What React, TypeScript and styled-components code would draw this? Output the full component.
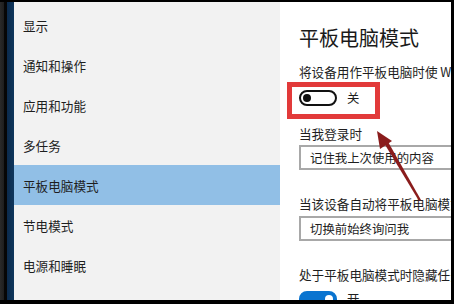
import React from "react";
import styled, { createGlobalStyle } from "styled-components";

const Global = createGlobalStyle`
  html, body { margin: 0; padding: 0; background: #000; }
  body { font-family: "Noto Sans CJK SC", "Noto Sans", sans-serif; }
`;

const Frame = styled.div`
  position: relative;
  width: 454px;
  height: 304px;
  box-sizing: border-box;
  padding: 2px 3px 4px 0;
  background: #000;
  display: flex;
  overflow: hidden;
`;

const LeftEdge = styled.div`
  width: 14px;
  flex: none;
  background: linear-gradient(
    to right,
    #2a2a2a 0px,
    #1e1e1e 4px,
    #060606 4px,
    #060606 7px,
    #0b2a4c 7px,
    #0f365c 14px
  );
`;

const Sidebar = styled.nav`
  width: 266px;
  flex: none;
  background: #f2f2f2;
  padding-top: 3px;
  box-sizing: border-box;
  overflow: hidden;
`;

const NavItem = styled.div<{ $active?: boolean }>`
  height: 40px;
  display: flex;
  align-items: center;
  padding-left: 9px;
  font-size: 12.6px;
  color: #1e1e1e;
  background: ${(p) => (p.$active ? "#91bfe6" : "transparent")};
  white-space: nowrap;
`;

const Content = styled.main`
  flex: 1;
  background: #fff;
  padding-left: 19px;
  overflow: hidden;
  white-space: nowrap;
`;

const Title = styled.h1`
  margin: 23px 0 0 0;
  font-size: 20px;
  line-height: 26px;
  font-weight: 400;
  color: #1a1a1a;
`;

const Label = styled.div<{ $top: number }>`
  margin-top: ${(p) => p.$top}px;
  font-size: 12.6px;
  line-height: 16px;
  color: #1e1e1e;
`;

const ToggleRow = styled.div<{ $top: number }>`
  margin-top: ${(p) => p.$top}px;
  display: flex;
  align-items: center;
  gap: 10px;
  font-size: 12.4px;
  color: #1e1e1e;
  height: 18px;
`;

const Toggle = styled.div<{ $on?: boolean }>`
  width: 38px;
  height: 16px;
  box-sizing: border-box;
  border-radius: 8px;
  border: 2px solid ${(p) => (p.$on ? "#0a74d0" : "#111")};
  background: ${(p) => (p.$on ? "#0a74d0" : "#fff")};
  display: flex;
  align-items: center;
  justify-content: ${(p) => (p.$on ? "flex-end" : "flex-start")};
  padding: 0 2px;
`;

const Knob = styled.div<{ $on?: boolean }>`
  width: 8px;
  height: 8px;
  border-radius: 50%;
  background: ${(p) => (p.$on ? "#fff" : "#111")};
`;

const Select = styled.div<{ $top: number }>`
  margin-top: ${(p) => p.$top}px;
  width: 200px;
  height: 25px;
  box-sizing: border-box;
  border: 2px solid #a8a8a8;
  border-right: none;
  display: flex;
  align-items: center;
  padding-left: 9px;
  font-size: 12.4px;
  color: #1e1e1e;
`;

const RedBox = styled.div`
  position: absolute;
  left: 287px;
  top: 82px;
  width: 93px;
  height: 37px;
  box-sizing: border-box;
  border: 5px solid #e23a3a;
  pointer-events: none;
`;

const Arrow = styled.svg`
  position: absolute;
  left: 0;
  top: 0;
  pointer-events: none;
`;

const items = [
  "显示",
  "通知和操作",
  "应用和功能",
  "多任务",
  "平板电脑模式",
  "节电模式",
  "电源和睡眠",
  "存储",
];

export default function App() {
  return (
    <>
      <Global />
      <Frame>
        <LeftEdge />
        <Sidebar>
          {items.map((t) => (
            <NavItem key={t} $active={t === "平板电脑模式"}>
              {t}
            </NavItem>
          ))}
        </Sidebar>
        <Content>
          <Title>平板电脑模式</Title>
          <Label $top={13}>将设备用作平板电脑时使 Windows 更便于触控</Label>
          <ToggleRow $top={9}>
            <Toggle>
              <Knob />
            </Toggle>
            关
          </ToggleRow>
          <Label $top={19}>当我登录时</Label>
          <Select $top={3}>记住我上次使用的内容</Select>
          <Label $top={26}>当该设备自动将平板电脑模式切换为打开或关闭时</Label>
          <Select $top={4}>切换前始终询问我</Select>
          <Label $top={26}>处于平板电脑模式时隐藏任务栏上的应用图标</Label>
          <ToggleRow $top={7}>
            <Toggle $on>
              <Knob $on />
            </Toggle>
            开
          </ToggleRow>
        </Content>
        <RedBox />
        <Arrow width="454" height="304" viewBox="0 0 454 304">
          <polygon points="384,143 387,140 421,200 419,201" fill="#8a1c1c" />
          <polygon points="377,131 392,141 380,149" fill="#8a1c1c" />
        </Arrow>
      </Frame>
    </>
  );
}
